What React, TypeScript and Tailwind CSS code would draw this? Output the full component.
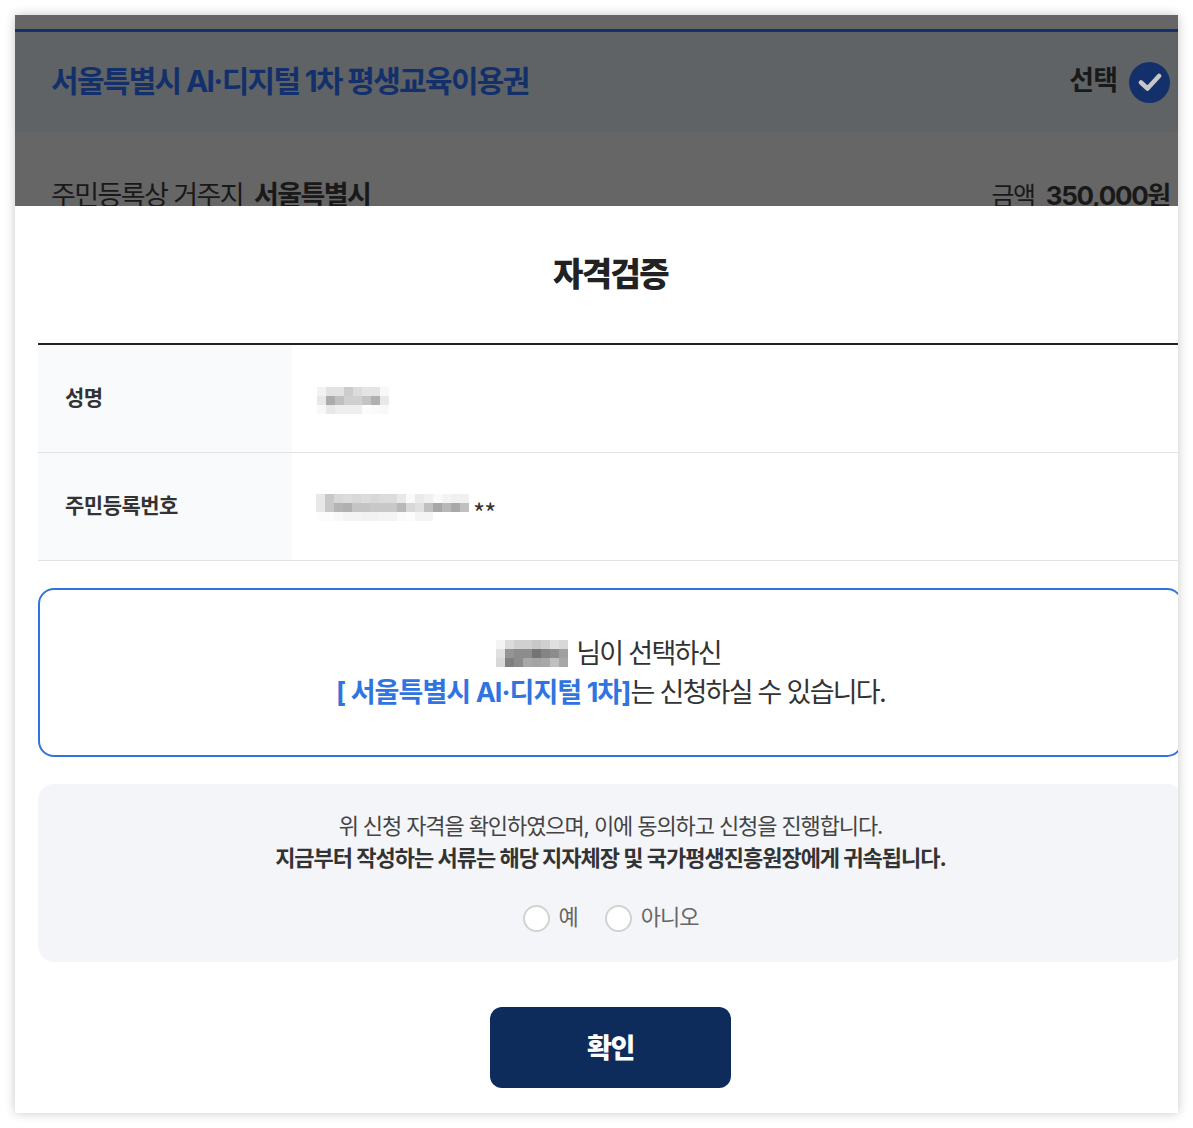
function Mosaic({ rows, cell = 9 }: { rows: string[][]; cell?: number }) {
  const cols = Math.max(...rows.map((r) => r.length));
  return (
    <svg width={cols * cell} height={rows.length * cell} className="block shrink-0">
      {rows.map((r, y) =>
        r.map((c, x) => <rect key={x + "-" + y} x={x * cell} y={y * cell} width={cell} height={cell} fill={"#" + c + c + c} />)
      )}
    </svg>
  );
}

const nameBlur = [
  ["f2", "e2", "e2", "cc", "dc", "e4", "e4", "f8"],
  ["e8", "ac", "c0", "d0", "d0", "c4", "b0", "e8"],
  ["f8", "e8", "ee", "ee", "ee", "fc", "fa", "f8"],
];
const idBlur = [
  ["e8", "c8", "d8", "dc", "d8", "dc", "d8", "dc", "dc", "e8", "fa", "ea", "f0", "fa", "f4", "f0", "f0"],
  ["e8", "c8", "b4", "b0", "c4", "c4", "c8", "c8", "c8", "b8", "d8", "e0", "c0", "a8", "b8", "a8", "c0"],
  ["fc", "fc", "f8", "f4", "f4", "f2", "f2", "f4", "f4", "fa", "fc", "f4", "f4", "ff", "ff", "ff", "ff"],
];
const inlineBlur = [
  ["f4", "dc", "d0", "d0", "c8", "d0", "e0", "d8"],
  ["e0", "94", "8c", "8c", "74", "84", "8c", "a0"],
  ["d8", "80", "8c", "a8", "a4", "a8", "c0", "a8"],
];

function Radio({ label }: { label: string }) {
  return (
    <label className="flex items-center gap-[9px] text-[22px] leading-none text-[#666] tracking-[-1px]">
      <span className="block w-[27px] h-[27px] rounded-full bg-white border-2 border-[#d2d2d2]" />
      <span className="relative -top-[2px]">{label}</span>
    </label>
  );
}

export default function App() {
  return (
    <div className="w-[1193px] h-[1128px] bg-white pt-[15px] pl-[15px] font-['Inter','Noto_Sans_CJK_KR',sans-serif]">
      <div className="w-[1163px] h-[1098px] flex flex-col overflow-hidden bg-white shadow-[0_0_10px_rgba(0,0,0,0.22)]">
        {/* dimmed page behind the modal */}
        <div className="h-[191px] shrink-0 overflow-hidden bg-[#666]">
          <div className="mt-[14px] h-[103px] border-t-[3px] border-[#14306b] bg-[#5f6366] flex items-center justify-between pl-[36px] pr-[8px]">
            <div className="text-[30px] leading-[40px] -mt-[3px] font-bold tracking-[-1.7px] text-[#14306b]">서울특별시 AI·디지털 1차 평생교육이용권</div>
            <div className="flex items-center gap-[12px]">
              <span className="text-[27px] leading-[40px] -mt-[3px] font-bold tracking-[-1px] text-[#191919]">선택</span>
              <span className="w-[41px] h-[41px] rounded-full bg-[#14306b] flex items-center justify-center">
                <svg width="24" height="20" viewBox="0 0 24 20" fill="none">
                  <path d="M3 10.5 L9.5 16.5 L21 4" stroke="#c8c8c8" strokeWidth="4.5" strokeLinecap="round" strokeLinejoin="round" />
                </svg>
              </span>
            </div>
          </div>
          <div className="flex items-center justify-between pl-[36px] pr-[8px] mt-[44px]">
            <div className="flex items-center gap-[11px] text-[27px] leading-[40px] tracking-[-1.6px] text-[#191919]">
              <span>주민등록상 거주지</span>
              <b className="font-bold">서울특별시</b>
            </div>
            <div className="flex items-center gap-[11px] leading-[40px] tracking-[-1.3px] text-[#191919]">
              <span className="text-[25px]">금액</span>
              <b className="text-[26px] font-bold">350,000원</b>
            </div>
          </div>
        </div>

        {/* modal */}
        <div className="w-[1168px] pl-[23px] shrink-0">
          <h2 className="h-[137px] pt-[45px] text-center text-[33px] leading-[46px] font-extrabold tracking-[-1.6px] text-[#222]">자격검증</h2>
          <div className="w-[1145px] border-t-2 border-[#222]">
            <div className="flex h-[108px] border-b border-[#e2e2e2]">
              <div className="w-[254px] bg-[#f9fafc] pl-[27px] pt-[38px] text-[21px] leading-[30px] font-bold tracking-[-0.5px] text-[#333]">성명</div>
              <div className="pl-[25px] pt-[42px]">
                <Mosaic rows={nameBlur} />
              </div>
            </div>
            <div className="flex h-[108px] border-b border-[#e2e2e2]">
              <div className="w-[254px] bg-[#f9fafc] pl-[27px] pt-[38px] text-[21px] leading-[30px] font-bold tracking-[-0.5px] text-[#333]">주민등록번호</div>
              <div className="pl-[24px] pt-[41px] flex items-start">
                <Mosaic rows={idBlur} />
                <span className="ml-[4px] font-['Noto_Sans_CJK_KR',sans-serif] text-[26px] leading-[30px] tracking-[-1px] text-[#333] mt-[3px]">**</span>
              </div>
            </div>
          </div>

          <div className="w-[1145px] h-[169px] mt-[27px] rounded-[16px] border-2 border-[#2f74e0] flex flex-col items-center justify-center text-[27px] leading-[39px] tracking-[-1.75px] text-[#333]">
            <div className="flex items-center gap-[8px] pr-[4px]">
              <Mosaic rows={inlineBlur} />
              <span className="tracking-[-1.7px] mt-[1px]">님이 선택하신</span>
            </div>
            <div>
              <b className="font-bold tracking-[-0.95px] text-[#2f74e0]">[ 서울특별시 AI·디지털 1차]</b>는 신청하실 수 있습니다.
            </div>
          </div>

          <div className="w-[1145px] h-[178px] mt-[27px] rounded-[16px] bg-[#f4f5f9] flex flex-col items-center pt-[26px]">
            <p className="text-[22px] leading-[33px] tracking-[-1.1px] text-[#444]">위 신청 자격을 확인하였으며, 이에 동의하고 신청을 진행합니다.</p>
            <p className="text-[22px] leading-[33px] -mt-[1px] tracking-[-1px] font-bold text-[#333]">지금부터 작성하는 서류는 해당 지자체장 및 국가평생진흥원장에게 귀속됩니다.</p>
            <div className="flex items-center gap-[27px] mt-[30px]">
              <Radio label="예" />
              <Radio label="아니오" />
            </div>
          </div>

          <div className="w-[1145px] flex justify-center mt-[45px]">
            <button className="w-[241px] h-[81px] pt-[3px] rounded-[12px] bg-[#0d2b5b] text-white text-[27px] font-extrabold tracking-[-1.3px]">확인</button>
          </div>
        </div>
      </div>
    </div>
  );
}
